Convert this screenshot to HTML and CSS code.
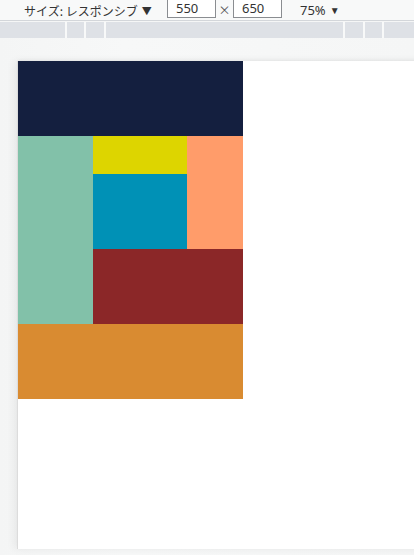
FILE: index.html
```html
<!DOCTYPE html>
<html lang="ja">
<head>
<meta charset="utf-8">
<link rel="stylesheet" href="styles.css">
</head>
<body>
<div class="toolbar">
  <span class="device">サイズ: レスポンシブ<span class="caret">▼</span></span>
  <span class="dim"><span class="box">550</span><span class="times">×</span><span class="box">650</span></span>
  <span class="zoom">75%<span class="caret">▼</span></span>
</div>
<div class="ruler">
  <div class="seg s1"></div><div class="seg s2"></div><div class="seg s3"></div><div class="seg mid"></div><div class="seg s4"></div><div class="seg s5"></div><div class="seg s6"></div>
</div>
<div class="workspace">
  <div class="viewport">
    <div class="grid">
      <div class="navy"></div>
      <div class="green"></div>
      <div class="yellow"></div>
      <div class="salmon"></div>
      <div class="blue"></div>
      <div class="red"></div>
      <div class="orange"></div>
    </div>
  </div>
</div>
</body>
</html>
```
FILE: styles.css
```css
html, body {
  margin: 0;
  padding: 0;
  width: 414px;
  height: 555px;
  overflow: hidden;
  background: #f5f6f6;
}
.toolbar {
  height: 20px;
  background: #f8f9f9;
  border-bottom: 1px solid #d3d6da;
  display: flex;
  align-items: center;
  font-family: "Noto Sans CJK JP", "Noto Sans", sans-serif;
  font-size: 12px;
  color: #333;
  box-sizing: content-box;
  overflow: hidden;
}
.device {
  margin-left: 24px;
  width: 143px;
  white-space: nowrap;
}
.caret {
  font-size: 10px;
  margin-left: 4px;
  position: relative;
  top: -1px;
}
.dim {
  display: flex;
  align-self: flex-start;
}
.box {
  width: 39px;
  height: 17px;
  border: 1px solid #8a8d91;
  border-top: none;
  background: #fff;
  padding-left: 8px;
  box-sizing: content-box;
  font-family: "Noto Sans", sans-serif;
  font-size: 13px;
  line-height: 16px;
  color: #333;
}
.times {
  width: 17px;
  text-align: center;
  font-size: 12px;
  line-height: 20px;
  color: #555;
}
.zoom {
  margin-left: 18px;
  font-family: "Noto Sans", sans-serif;
  font-size: 13px;
  white-space: nowrap;
}
.ruler {
  margin-top: 1px;
  height: 16px;
  display: flex;
  background: #f8f9f9;
}
.seg {
  background: #dee1e6;
  height: 16px;
  margin-right: 2px;
}
.s1 { width: 65px; }
.s2 { width: 17px; }
.s3 { width: 18px; }
.mid { width: 237px; }
.s4 { width: 18px; }
.s5 { width: 17px; }
.s6 { flex: 1; margin-right: 0; }
.workspace {
  padding: 23px 0 0 18px;
  background: linear-gradient(to right, #f4f5f5, #f7f8f8 30%, #f5f6f6);
  height: 497px;
}
.viewport {
  width: 413px;
  height: 488px;
  background: #fff;
  box-shadow: -1px 0 0 #dcdcdc, -4px 0 8px rgba(0,0,0,0.06), 0 -1px 3px rgba(0,0,0,0.05);
}
.grid {
  width: 225px;
  display: grid;
  grid-template-columns: 75px 94px 56px;
  grid-template-rows: 75px 37.5px 75px 75px 75px;
}
.navy { grid-column: 1 / 4; grid-row: 1; background: #141f3f; }
.green { grid-column: 1; grid-row: 2 / 5; background: #82c1a9; }
.yellow { grid-column: 2; grid-row: 2; background: #ddd500; }
.salmon { grid-column: 3; grid-row: 2 / 4; background: #ff9c6a; }
.blue { grid-column: 2; grid-row: 3; background: #0091b6; }
.red { grid-column: 2 / 4; grid-row: 4; background: #8b2728; }
.orange { grid-column: 1 / 4; grid-row: 5; background: #d98b31; }
```
